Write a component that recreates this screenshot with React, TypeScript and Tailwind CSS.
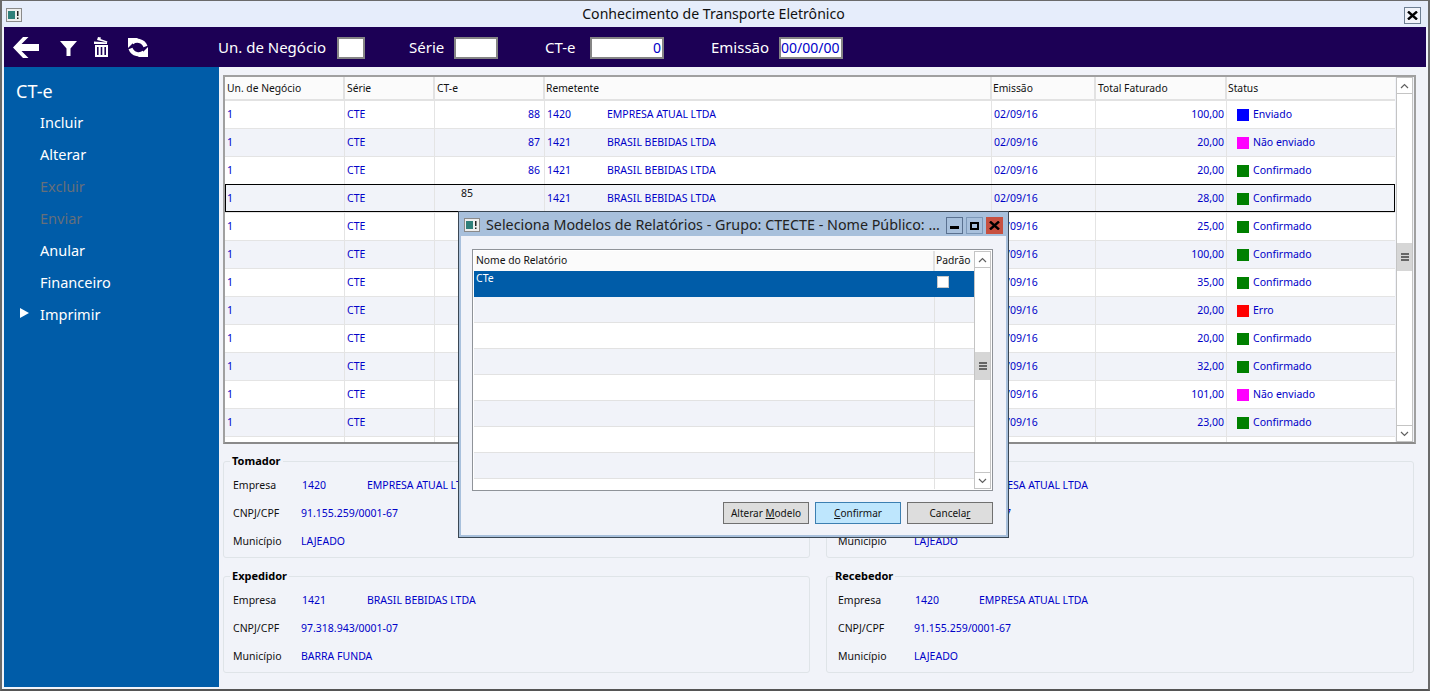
const rows = [
    { ct: "88", code: "1420", name: "EMPRESA ATUAL LTDA", total: "100,00", status: "Enviado" },
    { ct: "87", code: "1421", name: "BRASIL BEBIDAS LTDA", total: "20,00", status: "Não enviado" },
    { ct: "86", code: "1421", name: "BRASIL BEBIDAS LTDA", total: "20,00", status: "Confirmado" },
    { ct: "", code: "1421", name: "BRASIL BEBIDAS LTDA", total: "28,00", status: "Confirmado" },
    { ct: "", code: "", name: "", total: "25,00", status: "Confirmado" },
    { ct: "", code: "", name: "", total: "100,00", status: "Confirmado" },
    { ct: "", code: "", name: "", total: "35,00", status: "Confirmado" },
    { ct: "", code: "", name: "", total: "20,00", status: "Erro" },
    { ct: "", code: "", name: "", total: "20,00", status: "Confirmado" },
    { ct: "", code: "", name: "", total: "32,00", status: "Confirmado" },
    { ct: "", code: "", name: "", total: "101,00", status: "Não enviado" },
    { ct: "", code: "", name: "", total: "23,00", status: "Confirmado" },
];

const statusColor = (status: string) => {
    if (status === "Enviado") return "bg-[#0000ff]";
    if (status === "Não enviado") return "bg-[#ff00ff]";
    if (status === "Erro") return "bg-[#ff0000]";
    return "bg-[#008000]";
};

const columns = "grid grid-cols-[120px_90px_110px_447px_104px_131px_168px]";

const WindowIcon = () => (
    <svg width="16" height="14" viewBox="0 0 16 14">
        <rect x="0.5" y="0.5" width="15" height="13" fill="#eeeeee" stroke="#8a8a8a" />
        <rect x="2" y="3" width="7" height="8" fill="#2f7f7a" />
        <rect x="11" y="3" width="1.5" height="5" fill="#222222" />
        <rect x="11" y="9.5" width="1.5" height="1.5" fill="#222222" />
    </svg>
);

const BackIcon = () => (
    <svg className="ml-[9px]" width="26" height="21" viewBox="0 0 26 21" fill="white">
        <path d="M0 10.5L10 0h5.5L8.5 7H26v7H8.5l7 7H10z" />
    </svg>
);

const FilterIcon = () => (
    <svg className="ml-[21px] mt-[1px]" width="17" height="15" viewBox="0 0 17 15" fill="white">
        <path d="M0 0h17L10.5 7.5V15h-4V7.5z" />
    </svg>
);

const TrashIcon = () => (
    <svg className="ml-[17px] -mt-[1px]" width="15" height="20" viewBox="0 0 15 20" fill="white">
        <path d="M0 4.5L13 5.5V7H0zM3 3l1-3 3 .5L6.5 2l7 2.5-.5 1z" />
        <path d="M1 8h13v12H1zM3 10v8h1.6v-8zM6.7 10v8h1.6v-8zM10.4 10v8H12v-8z" fillRule="evenodd" />
    </svg>
);

const RefreshIcon = () => (
    <svg className="ml-[19px]" width="20" height="19" viewBox="0 0 20 19">
        <path d="M0 0h10L0 10z" fill="white" />
        <path d="M20 19H10l10-10z" fill="white" />
        <path d="M4 4.500C8 1.500 15 2 17.500 8.500" fill="none" stroke="white" strokeWidth="4.200" />
        <path d="M16 14.500C12 17.500 5 17 2.500 10.500" fill="none" stroke="white" strokeWidth="4.200" />
    </svg>
);

const ScrollBar = ({ thumbClass }: { thumbClass: string }) => (
    <div className="flex w-[17px] flex-col border border-[#c4c4c4] bg-white">
        <div className="flex h-[16px] items-center justify-center border-b border-[#c4c4c4] text-[#606060]">
            <svg width="9" height="6" viewBox="0 0 9 6" fill="none" stroke="currentColor" strokeWidth="1.2">
                <path d="M1 5l3.5-3.5L8 5" />
            </svg>
        </div>
        <div className="flex-1">
            <div className={`flex h-[28px] flex-col items-center justify-center gap-[1px] bg-[#d6d6d6] ${thumbClass}`}>
                <span className="h-[2px] w-[8px] bg-[#666666]" />
                <span className="h-[2px] w-[8px] bg-[#666666]" />
                <span className="h-[2px] w-[8px] bg-[#666666]" />
            </div>
        </div>
        <div className="flex h-[16px] items-center justify-center border-t border-[#c4c4c4] text-[#606060]">
            <svg width="9" height="6" viewBox="0 0 9 6" fill="none" stroke="currentColor" strokeWidth="1.2">
                <path d="M1 1l3.5 3.5L8 1" />
            </svg>
        </div>
    </div>
);

const Input = ({ box, children }: { box: string; children?: React.ReactNode }) => (
    <div className={`h-[22px] border-2 border-[#858585] bg-white text-[14px] leading-[17px] text-[#0000c8] ${box}`}>{children}</div>
);

const Group = ({ title, code, name, cnpj, city, right }: { title: string; code: string; name: string; cnpj: string; city: string; right?: boolean }) => (
    <fieldset className={`h-[103px] rounded-[3px] border border-[#dfe4e8] ${right ? "pl-[11px]" : "pl-[9px]"}`}>
        <legend className={`px-[2px] text-[11px] leading-[12px] font-bold text-black ${right ? "-ml-[5px]" : "-ml-[3px]"}`}>{title}</legend>
        <div className={`mt-[5px] grid auto-rows-[28px] items-center text-[10.5px] ${right ? "grid-cols-[77px_64px_1fr]" : "grid-cols-[69px_65px_1fr]"}`}>
            <span>Empresa</span>
            <span className="text-[#0000c8]">{code}</span>
            <span className="text-[#0000c8]">{name}</span>
            <span>CNPJ/CPF</span>
            <span className="col-span-2 -ml-[1px] text-[#0000c8]">{cnpj}</span>
            <span>Município</span>
            <span className="col-span-2 -ml-[1px] text-[#0000c8]">{city}</span>
        </div>
    </fieldset>
);

const MenuItem = ({ label, disabled }: { label: string; disabled?: boolean }) => (
    <div className={`h-[32px] pl-[36px] text-[14.5px] leading-[32px] ${disabled ? "text-[#666f7a]" : "text-white"}`}>{label}</div>
);

const DialogButton = ({ children, primary }: { children: React.ReactNode; primary?: boolean }) => (
    <div className={`flex h-[22px] w-[86px] items-center justify-center border text-[10px] ${primary ? "border-[#3c7fb1] bg-[#bee6fd]" : "border-[#707070] bg-[#dddddd]"}`}>
        {children}
    </div>
);

export default function App() {
    return (
        <div className="relative flex h-[692px] w-[1430px] flex-col overflow-hidden bg-white font-['Noto_Sans','Open_Sans',sans-serif] text-[10.5px] text-[#111111]">
            <div className="flex h-[691px] flex-col border-x-2 border-t border-b-2 border-x-[#6a6a6a] border-t-[#6a6a6a] border-b-[#555555] bg-[#f1f3f9]">
                {/* title bar */}
                <div className="relative flex h-[26px] items-center justify-center bg-[#e6edfb] pr-[3px] text-[14.100px] text-[#111111]">
                    <div className="absolute left-[4px] top-[7px]">
                        <WindowIcon />
                    </div>
                    <span>Conhecimento de Transporte Eletrônico</span>
                    <div className="absolute right-[7px] top-[6px] flex h-[17px] w-[17px] items-center justify-center border border-[#6e7f93] bg-[#f1f3f9]">
                        <svg width="11" height="9" viewBox="0 0 11 9" fill="none" stroke="black" strokeWidth="2.4">
                            <path d="M1 0.5l9 8M10 0.5l-9 8" />
                        </svg>
                    </div>
                </div>

                <div className="flex flex-1 flex-col px-[2px] pb-[2px]">
                    {/* toolbar */}
                    <div className="flex h-[40px] items-center bg-[#1c0055] pt-[1px] text-[15px] text-white">
                        <BackIcon />
                        <FilterIcon />
                        <TrashIcon />
                        <RefreshIcon />
                        <div className="ml-[70px] flex items-center">
                            <span className="w-[119px]">Un. de Negócio</span>
                            <Input box="w-[28px]" />
                            <span className="ml-[44px] w-[45px]">Série</span>
                            <Input box="w-[44px]" />
                            <span className="ml-[47px] w-[45px]">CT-e</span>
                            <Input box="w-[74px] pr-[1px] text-right">0</Input>
                            <span className="ml-[47px] w-[68px]">Emissão</span>
                            <Input box="w-[64px]">00/00/00</Input>
                        </div>
                    </div>

                    <div className="flex flex-1">
                        {/* side menu */}
                        <div className="w-[215px] bg-[#005ca8] pt-[11px]">
                            <div className="h-[26px] pl-[12px] text-[18px] leading-[26px] text-white">CT-e</div>
                            <div className="mt-[2px]">
                                <MenuItem label="Incluir" />
                                <MenuItem label="Alterar" />
                                <MenuItem label="Excluir" disabled />
                                <MenuItem label="Enviar" disabled />
                                <MenuItem label="Anular" />
                                <MenuItem label="Financeiro" />
                                <div className="relative">
                                    <MenuItem label="Imprimir" />
                                    <span className="absolute left-[16px] top-[10px] h-0 w-0 border-y-[5px] border-l-[9px] border-y-transparent border-l-white" />
                                </div>
                            </div>
                        </div>

                        {/* content */}
                        <div className="flex flex-1 flex-col gap-[11px] pt-[8px] pr-[10px] pl-[4px]">
                            <div className="flex h-[369px] justify-between overflow-hidden border-2 border-[#a0a0a0] border-b-[#8a8a8a] bg-[#f1f3f9] pr-[1px]">
                                <div className="relative w-[1170px] overflow-hidden">
                                    <div className={`${columns} h-[24px] border-b-2 border-[#e2e2e2] bg-[#fbfbfb] text-[10.300px] leading-[22px]`}>
                                        <div className="border-r-2 border-[#e2e2e2] pl-[2px]">Un. de Negócio</div>
                                        <div className="border-r-2 border-[#e2e2e2] pl-[2px]">Série</div>
                                        <div className="border-r-2 border-[#e2e2e2] pl-[2px]">CT-e</div>
                                        <div className="border-r-2 border-[#e2e2e2] pl-[1px]">Remetente</div>
                                        <div className="border-r-2 border-[#e2e2e2] pl-[1px]">Emissão</div>
                                        <div className="border-r-2 border-[#e2e2e2] pl-[2px]">Total Faturado</div>
                                        <div className="pl-[1px]">Status</div>
                                    </div>
                                    {rows.map((row, i) => (
                                        <div key={i} className={`${columns} relative h-[28px] border-b border-[#e4e4e4] leading-[27px] text-[#0000c8] ${i % 2 === 0 ? "bg-white" : "bg-[#f1f3f9]"}`}>
                                            <div className="border-r border-[#e4e4e4] pl-[2px]">1</div>
                                            <div className="border-r border-[#e4e4e4] pl-[2px]">CTE</div>
                                            <div className="border-r border-[#e4e4e4] pr-[4px] text-right">{row.ct}</div>
                                            <div className="flex border-r border-[#e4e4e4] pl-[2px]">
                                                <span className="w-[60px]">{row.code}</span>
                                                <span>{row.name}</span>
                                            </div>
                                            <div className="border-r border-[#e4e4e4] pl-[2px]">02/09/16</div>
                                            <div className="border-r border-[#e4e4e4] pr-[2px] text-right">{row.total}</div>
                                            <div className="flex items-center pl-[10px]">
                                                <span className={`mr-[4px] h-[12px] w-[12px] ${statusColor(row.status)}`} />
                                                {row.status}
                                            </div>
                                            {i === 3 && (
                                                <div className="absolute -top-[1px] left-0 h-[28px] w-[1170px] border border-black leading-[16px]">
                                                    <span className="absolute left-[235px] top-[0px] text-[#111111]">85</span>
                                                </div>
                                            )}
                                        </div>
                                    ))}
                                    <div className={`${columns} h-[10px] bg-white`}>
                                        <div className="border-r border-[#e4e4e4]" />
                                        <div className="border-r border-[#e4e4e4]" />
                                        <div className="border-r border-[#e4e4e4]" />
                                        <div className="border-r border-[#e4e4e4]" />
                                        <div className="border-r border-[#e4e4e4]" />
                                        <div className="border-r border-[#e4e4e4]" />
                                    </div>
                                </div>
                                <ScrollBar thumbClass="mt-[149px]" />
                            </div>

                            <div className="grid grid-cols-[587px_588px] gap-x-[16px] gap-y-[12px]">
                                <Group title="Tomador" code="1420" name="EMPRESA ATUAL LTDA" cnpj="91.155.259/0001-67" city="LAJEADO" />
                                <Group right title="Destinatário" code="1420" name="EMPRESA ATUAL LTDA" cnpj="91.155.259/0001-67" city="LAJEADO" />
                                <Group title="Expedidor" code="1421" name="BRASIL BEBIDAS LTDA" cnpj="97.318.943/0001-07" city="BARRA FUNDA" />
                                <Group right title="Recebedor" code="1420" name="EMPRESA ATUAL LTDA" cnpj="91.155.259/0001-67" city="LAJEADO" />
                            </div>
                        </div>
                    </div>
                </div>
            </div>

            {/* report model dialog */}
            <div className="absolute top-[211px] left-[458px] flex h-[327px] w-[551px] flex-col border border-[#3a4754] bg-[#a8c0dc] px-[2px] pb-[2px]">
                <div className="relative flex h-[24px] items-center pt-[2px] pl-[25px] text-[14.300px] text-[#222222]">
                    <div className="absolute left-[3px] top-[6px]">
                        <WindowIcon />
                    </div>
                    Seleciona Modelos de Relatórios - Grupo: CTECTE - Nome Público: ...
                    <div className="absolute right-[3px] top-[5px] flex gap-[3px]">
                        <div className="flex h-[17px] w-[17px] items-center justify-center border border-[#5a7190] bg-[#a8c0dc]">
                            <span className="mt-[4px] h-[3px] w-[9px] bg-black" />
                        </div>
                        <div className="flex h-[17px] w-[17px] items-center justify-center border border-[#7d98b8] bg-[#a8c0dc]">
                            <span className="h-[8px] w-[9px] border-2 border-black" />
                        </div>
                        <div className="flex h-[17px] w-[17px] items-center justify-center bg-[#c75040]">
                            <svg width="11" height="9" viewBox="0 0 11 9" fill="none" stroke="black" strokeWidth="2.4">
                                <path d="M1 0.5l9 8M10 0.5l-9 8" />
                            </svg>
                        </div>
                    </div>
                </div>
                <div className="flex flex-1 flex-col bg-[#f1f3f9] pt-[13px] pr-[13px] pl-[11px]">
                    <div className="flex h-[242px] justify-between overflow-hidden border border-[#8f9399] bg-white p-[1px]">
                        <div className="w-[501px] overflow-hidden">
                            <div className="grid h-[20px] grid-cols-[461px_40px] bg-[#fbfbfb] text-[10.300px] leading-[19px]">
                                <div className="border-r-2 border-[#e2e2e2] pl-[2px]">Nome do Relatório</div>
                                <div className="pl-[1px]">Padrão</div>
                            </div>
                            <div className="grid h-[26px] grid-cols-[461px_40px] bg-[#005ca8] text-white">
                                <div className="pl-[2px] leading-[15px]">CTe</div>
                                <div className="pt-[5px] pl-[2px]">
                                    <div className="h-[12px] w-[12px] border border-[#c8c8c8] bg-white" />
                                </div>
                            </div>
                            {[0, 1, 2, 3, 4, 5, 6, 7].map((i) => (
                                <div key={i} className={`grid h-[26px] grid-cols-[461px_40px] border-b border-[#e2e2e2] ${i % 2 === 0 ? "bg-[#f1f3f9]" : "bg-white"}`}>
                                    <div className="border-r border-[#e2e2e2]" />
                                    <div />
                                </div>
                            ))}
                        </div>
                        <ScrollBar thumbClass="mt-[84px]" />
                    </div>
                    <div className="mt-[11px] flex justify-end gap-[6px]">
                        <DialogButton>
                            <span>Alterar <u>M</u>odelo</span>
                        </DialogButton>
                        <DialogButton primary>
                            <span><u>C</u>onfirmar</span>
                        </DialogButton>
                        <DialogButton>
                            <span>Cancela<u>r</u></span>
                        </DialogButton>
                    </div>
                </div>
            </div>
        </div>
    );
}
